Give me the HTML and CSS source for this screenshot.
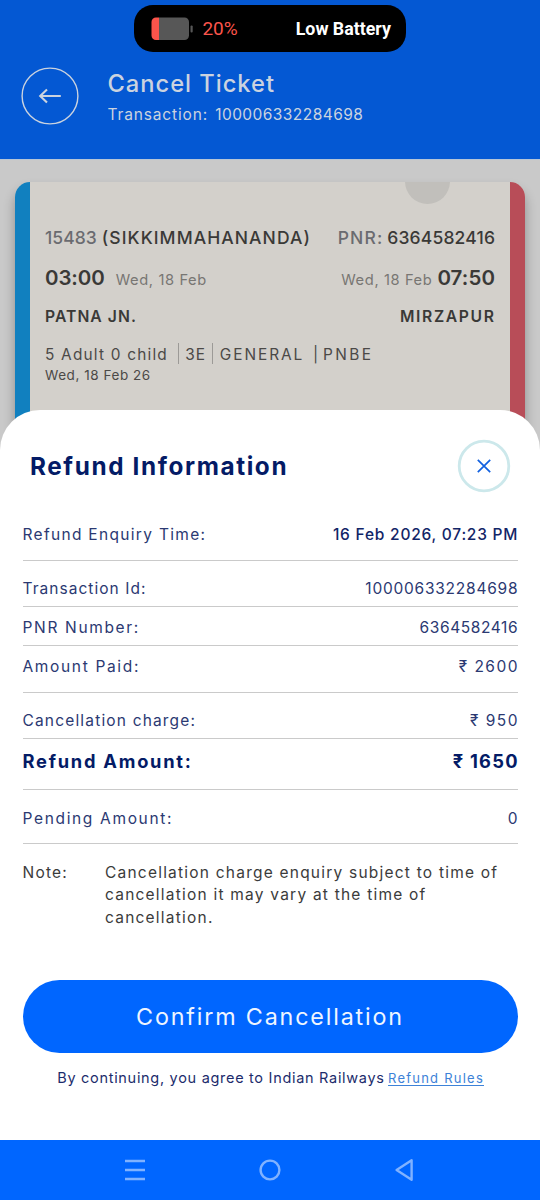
FILE: index.html
```html
<!DOCTYPE html>
<html lang="en">
<head>
<meta charset="utf-8">
<title>Cancel Ticket</title>
<link rel="stylesheet" href="styles.css">
</head>
<body>
<div class="screen">
  <header class="header">
    <div class="back">
      <svg width="58" height="58" viewBox="0 0 58 58" fill="none"><circle cx="29" cy="29" r="27.9" stroke="#cbd3df" stroke-width="1.4"/><path d="M39.8 29H19.2M26 22.4L19.2 29L26 35.6" stroke="#cbd3df" stroke-width="2.1"/></svg>
    </div>
    <div class="heading">
      <h1 class="title">Cancel Ticket</h1>
      <p class="txn"><span class="t txn-label">Transaction:</span><span class="t txn-id">100006332284698</span></p>
    </div>
  </header>

  <main class="backdrop">
    <section class="ticket">
      <div class="stripe stripe-blue"></div>
      <div class="ticket-body">
        <div class="line train">
          <div class="group"><span class="t num muted">15483</span><span class="t train-name">(SIKKIMMAHANANDA)</span></div>
          <div class="group"><span class="t pnr-label muted">PNR:</span><span class="t pnr">6364582416</span></div>
        </div>
        <div class="line times">
          <div class="group"><span class="t time time-from">03:00</span><span class="t date date-from">Wed, 18 Feb</span></div>
          <div class="group"><span class="t date date-to">Wed, 18 Feb</span><span class="t time">07:50</span></div>
        </div>
        <div class="line stations"><span class="t from">PATNA JN.</span><span class="t to">MIRZAPUR</span></div>
        <div class="details">
          <span class="t pax">5 Adult 0 child</span><i class="rule rule-a"></i><span class="t cls">3E</span><i class="rule rule-b"></i><span class="t quota">GENERAL</span><span class="bar">|</span><span class="t boarding">PNBE</span>
        </div>
        <div class="t boarding-date">Wed, 18 Feb 26</div>
      </div>
      <div class="stripe stripe-red"></div>
      <div class="notch"></div>
    </section>
  </main>

  <section class="sheet">
    <div class="sheet-head">
      <h2 class="sheet-title">Refund Information</h2>
      <div class="close">
        <svg width="54" height="54" viewBox="0 0 54 54" fill="none"><circle cx="27" cy="27" r="24.8" stroke="#cce8eb" stroke-width="2.8"/><path d="M20.8 20.8L33.2 33.2M33.2 20.8L20.8 33.2" stroke="#1261e0" stroke-width="1.7"/></svg>
      </div>
    </div>
    <div class="rows">
      <div class="row row-time"><span class="t l-time">Refund Enquiry Time:</span><span class="t v-time">16 Feb 2026, 07:23 PM</span></div>
      <div class="row row-top"><span class="t l-txn">Transaction Id:</span><span class="t v-txn">100006332284698</span></div>
      <div class="row"><span class="t l-wide">PNR Number:</span><span class="t v-pnr">6364582416</span></div>
      <div class="row row-paid"><span class="t l-wide">Amount Paid:</span><span class="t v-amt">₹ 2600</span></div>
      <div class="row row-top"><span class="t l-charge">Cancellation charge:</span><span class="t v-amt">₹ 950</span></div>
      <div class="row row-refund"><span class="t l-refund">Refund Amount:</span><span class="t v-refund">₹ 1650</span></div>
      <div class="row row-pending"><span class="t l-wide">Pending Amount:</span><span class="t">0</span></div>
    </div>
    <div class="note">
      <span class="note-label">Note:</span>
      <p class="note-text">Cancellation charge enquiry subject to time of<br>cancellation it may vary at the time of<br>cancellation.</p>
    </div>
    <button class="confirm">Confirm Cancellation</button>
    <p class="terms"><span class="t terms-text">By continuing, you agree to Indian Railways</span><a class="t terms-link">Refund Rules</a></p>
  </section>

  <nav class="nav">
    <svg width="22" height="24" viewBox="0 0 22 24" stroke="#80b2ff" stroke-width="2.4"><path d="M1 3H21M1 12H21M1 21H21"/></svg>
    <svg width="24" height="24" viewBox="0 0 24 24" fill="none" stroke="#80b2ff" stroke-width="2.4"><circle cx="12" cy="12" r="9.4"/></svg>
    <svg width="22" height="24" viewBox="0 0 22 24" fill="none" stroke="#80b2ff" stroke-width="2.4" stroke-linejoin="round"><path d="M18.6 2.2V21.8L3.6 12Z"/></svg>
  </nav>

  <div class="island">
    <div class="group-battery">
      <svg width="43" height="24" viewBox="0 0 43 24"><path d="M8 0.5H33.5A4.500 4.500 0 0 1 38 5V18.500A4.500 4.500 0 0 1 33.500 23H8Z" fill="#575757"/><path d="M8 0.500H5A4.500 4.500 0 0 0 0.500 5V18.500A4.500 4.500 0 0 0 5 23H8Z" fill="#fb544b"/><rect x="39.500" y="8.500" width="2.200" height="7" rx="1" fill="#575757"/></svg>
      <span class="percent">20%</span>
    </div>
    <span class="low">Low Battery</span>
  </div>
</div>
</body>
</html>
```
FILE: styles.css
```css
* { box-sizing: border-box; }
body { margin: 0; font-family: Inter, "Open Sans", sans-serif; }
h1, h2, p { margin: 0; }
.screen { position: relative; width: 540px; height: 1200px; overflow: hidden; background: #c9c9c9; display: flex; flex-direction: column; }
.t { --ls: 0px; letter-spacing: var(--ls); margin-right: calc(-1 * var(--ls)); white-space: nowrap; }

/* Header */
.header { height: 159px; flex: none; background: #0458d3; color: #cbd3df; display: flex; padding: 67px 0 0 20.500px; }
.back { width: 58px; height: 58px; }
.back svg, .close svg, .nav svg { display: block; }
.heading { padding: 2px 0 0 29px; }
.title { font-size: 23.700px; font-weight: 500; line-height: 30px; letter-spacing: 0.980px; }
.txn { display: flex; gap: 8px; font-size: 15.500px; line-height: 20px; padding-top: 5.500px; }
.txn-label { --ls: 0.850px; }
.txn-id { --ls: 0.440px; }

/* Ticket behind the sheet */
.backdrop { height: 251px; flex: none; padding: 21.500px 15px 0; border-top: 1px solid #b7c5d6; }
.ticket { position: relative; display: flex; height: 300px; border-radius: 15px 15px 0 0; overflow: hidden; background: #d3d0cb; color: #3a3937; }
.backdrop .ticket { box-shadow: 0 8px 12px rgba(0, 0, 0, 0.300); }
.stripe { width: 15px; flex: none; }
.stripe-blue { background: #1180bf; }
.stripe-red { background: #b84d58; }
.ticket-body { flex: 1; padding: 44px 15px 0 15px; }
.notch { position: absolute; left: 390px; top: -22.500px; width: 45px; height: 45px; border-radius: 50%; background: #c1bfbb; }
.line { display: flex; justify-content: space-between; align-items: baseline; }
.group { display: flex; align-items: baseline; }
.muted { color: #6a6b70; }
.train { font-size: 17.500px; font-weight: 500; line-height: 24px; }
.num { --ls: 0.050px; }
.train-name { --ls: 1.080px; margin-left: 5px; }
.pnr-label { --ls: 1.100px; }
.pnr { --ls: 0.180px; margin-left: 5px; }
.times { line-height: 26px; padding-top: 15px; }
.time { font-size: 20.500px; font-weight: 600; --ls: 0.100px; }
.time-from { --ls: -0.100px; }
.date { font-size: 14.700px; color: #787673; --ls: 0.600px; }
.date-from { margin-left: 11px; }
.date-to { margin-right: 5px; }
.stations { font-size: 15.700px; font-weight: 600; line-height: 22px; padding-top: 13.500px; }
.from { --ls: 1.050px; }
.to { --ls: 1.650px; margin-right: -0.700px; }
.details { display: flex; align-items: center; font-size: 15.400px; line-height: 22px; padding-top: 15.500px; color: #4b4947; }
.pax { --ls: 1.200px; width: 123px; }
.rule { width: 1.500px; height: 21px; background: #9c9a97; margin-top: -3px; }
.rule-a { margin-left: 11px; }
.rule-b { margin-left: 7.500px; }
.cls { --ls: 1px; margin-left: 6px; width: 20px; }
.quota { --ls: 1.950px; margin-left: 6.500px; width: 84px; }
.bar { margin-left: 11px; width: 8px; }
.boarding { --ls: 2.500px; margin-left: 2px; }
.boarding-date { font-size: 13.500px; line-height: 18px; --ls: 0.550px; color: #4b4947; }

/* Bottom sheet */
.sheet { position: relative; height: 730px; flex: none; background: #fff; border-radius: 40px 40px 0 0; padding: 29px 22.500px 0; color: #2b3972; }
.sheet-head { display: flex; justify-content: space-between; align-items: center; height: 54px; padding: 0 7px 0 7.500px; }
.sheet-title { font-size: 24.300px; font-weight: 700; line-height: 30px; letter-spacing: 1.620px; color: #041b66; }
.rows { padding-top: 15px; font-size: 15.500px; line-height: 22px; }
.row { display: flex; justify-content: space-between; padding: 9.500px 0 6.500px; border-bottom: 1px solid #cacaca; }
.row-time { padding: 15.500px 0 14.500px; }
.row-top { padding-top: 16.500px; height: 46px; }
.row-paid { padding-bottom: 14.500px; }
.row-refund { padding: 10.500px 0 17.500px; font-size: 18.300px; font-weight: 700; color: #041b66; }
.row-pending { padding: 17.500px 0 13.500px; }
.l-time { --ls: 1.310px; }
.v-time { --ls: 0.780px; font-weight: 500; color: #122567; }
.l-txn { --ls: 1.040px; }
.v-txn { --ls: 0.760px; }
.l-wide { --ls: 1.660px; }
.v-pnr { --ls: 0.580px; }
.v-amt { --ls: 1.500px; }
.l-charge { --ls: 1.170px; }
.l-refund { --ls: 1.750px; }
.v-refund { --ls: 1.250px; }
.note { display: flex; padding-top: 17.500px; font-size: 15.500px; line-height: 22.500px; letter-spacing: 1.220px; color: #3b3b3b; }
.note-label { width: 82.500px; flex: none; }
.note-text { white-space: nowrap; }
.confirm { display: block; width: 495px; height: 73px; margin: 50.500px 0 0; padding: 0; border: 0; border-radius: 36.500px; background: #0066ff; color: #eef5ff; font: 400 23.300px/73px Inter, sans-serif; letter-spacing: 1.830px; text-align: center; }
.terms { display: flex; justify-content: center; align-items: baseline; gap: 4px; padding-top: 14px; line-height: 22px; }
.terms-text { font-size: 14.500px; --ls: 0.700px; color: #1c2c6c; }
.terms-link { font-size: 13px; --ls: 1.230px; color: #3d82d8; text-decoration: underline; text-underline-offset: 2px; }

/* System navigation */
.nav { height: 60px; flex: none; background: #0066ff; display: flex; justify-content: space-between; align-items: center; padding: 0 125px 0 124px; }

/* Battery notification pill */
.island { position: absolute; left: 134px; top: 5px; width: 272px; height: 47px; border-radius: 19px; background: #000; display: flex; justify-content: space-between; align-items: center; padding: 0 15px 0 17px; font-family: Roboto, sans-serif; }
.group-battery { display: flex; align-items: center; gap: 8.500px; }
.percent { font-size: 19px; letter-spacing: -0.100px; color: #fb544b; }
.low { font-size: 17.800px; font-weight: 700; color: #fff; }
```
